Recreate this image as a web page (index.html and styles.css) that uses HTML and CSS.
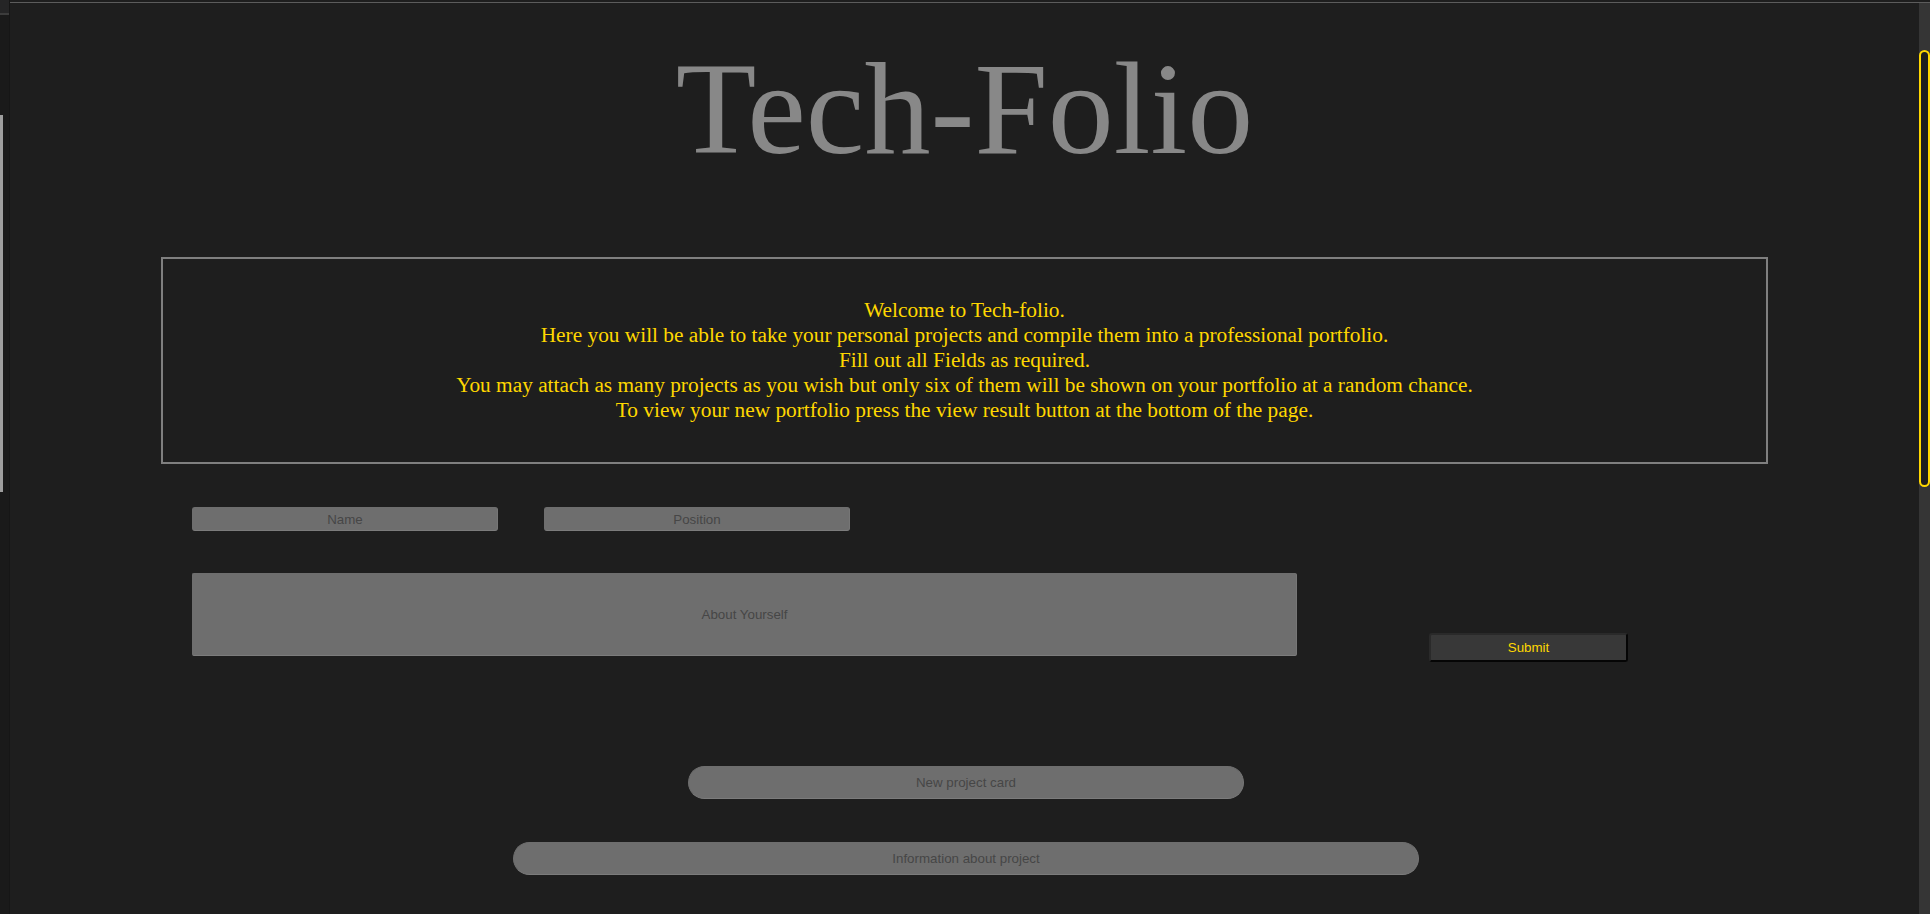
FILE: index.html
```html
<!DOCTYPE html>
<html lang="en">
<head>
<meta charset="utf-8">
<title>Tech-Folio</title>
<link rel="stylesheet" href="styles.css">
</head>
<body>
<div class="window">
  <aside class="sidebar">
    <div class="sidebar-head"></div>
    <div class="sidebar-body"><div class="sidebar-mark"></div></div>
  </aside>
  <div class="viewport">
    <div class="topline"></div>
    <div class="viewport-row">
      <main class="page">
        <h1 class="title">Tech-Folio</h1>
        <section class="intro">
          <p>Welcome to Tech-folio.<br>
          Here you will be able to take your personal projects and compile them into a professional portfolio.<br>
          Fill out all Fields as required.<br>
          You may attach as many projects as you wish but only six of them will be shown on your portfolio at a random chance.<br>
          To view your new portfolio press the view result button at the bottom of the page.</p>
        </section>
        <form class="profile">
          <div class="field-row">
            <input class="field" type="text" placeholder="Name">
            <input class="field" type="text" placeholder="Position">
          </div>
          <div class="about-row">
            <textarea class="about" placeholder="About Yourself"></textarea>
            <button class="submit" type="button">Submit</button>
          </div>
        </form>
        <div class="projects">
          <input class="pill pill-card" type="text" placeholder="New project card">
          <input class="pill pill-info" type="text" placeholder="Information about project">
        </div>
      </main>
      <div class="scrollbar"><div class="scroll-thumb"></div></div>
    </div>
  </div>
</div>
</body>
</html>
```

FILE: styles.css
```css
html, body {
  margin: 0;
  padding: 0;
  height: 100%;
  background: #1e1e1e;
  overflow: hidden;
}

.window {
  display: flex;
  height: 914px;
}

.sidebar {
  width: 10px;
  flex: none;
  display: flex;
  flex-direction: column;
  background: #1a1a1a;
  border-right: 1px solid #161616;
  box-sizing: border-box;
}

.sidebar-head {
  height: 13px;
  background: #252526;
  border-bottom: 2px solid #3c3c3c;
}

.sidebar-body {
  flex: 1;
  padding-top: 100px;
}

.sidebar-mark {
  width: 3px;
  height: 377px;
  background: #9e9e9e;
}

.viewport {
  flex: 1;
  display: flex;
  flex-direction: column;
  min-width: 0;
}

.topline {
  height: 2px;
  border-bottom: 1px solid #5c5c5c;
  flex: none;
}

.viewport-row {
  flex: 1;
  display: flex;
  min-height: 0;
}

.page {
  flex: 1;
  min-width: 0;
  display: flex;
  flex-direction: column;
}

.title {
  margin: 40px 0 0;
  text-align: center;
  font-family: "Liberation Serif", "Times New Roman", serif;
  font-weight: normal;
  font-size: 132px;
  line-height: 132px;
  color: #888888;
}

.intro {
  margin: 82px 151px 0;
  border: 2px solid #7f7f7f;
  padding: 39px 0 39px;
  text-align: center;
}

.intro p {
  margin: 0;
  font-family: "Liberation Serif", "Times New Roman", serif;
  font-size: 21.33px;
  line-height: 25px;
  color: #ffd700;
}

.profile {
  margin: 43px 151px 0;
  padding-left: 31px;
  display: flex;
  flex-direction: column;
  gap: 42px;
}

.field-row {
  display: flex;
  gap: 46px;
}

.field,
.about,
.pill {
  box-sizing: border-box;
  background: #6e6e6e;
  border: 1px solid #6e6e6e;
  border-bottom-color: #7c7c7c;
  border-right-color: #767676;
  color: #333;
  font-family: "Liberation Sans", Arial, sans-serif;
  font-size: 13.33px;
  text-align: center;
  outline: none;
  margin: 0;
}

.field::placeholder,
.about::placeholder,
.pill::placeholder {
  color: #464646;
  opacity: 1;
}

.field {
  width: 306px;
  height: 24px;
  border-radius: 3px;
  padding: 0 4px;
}

.about-row {
  display: flex;
  align-items: flex-start;
  gap: 132px;
}

.about {
  width: 1105px;
  height: 83px;
  border-radius: 2px;
  padding: 33px 4px 0;
  resize: none;
  line-height: 15px;
  overflow: hidden;
}

.submit {
  margin-top: 60px;
  width: 199px;
  height: 29px;
  box-sizing: border-box;
  background: #383838;
  border: 2px solid #2a2a2a;
  border-right-color: #050505;
  border-bottom-color: #050505;
  border-radius: 3px;
  color: #ffd700;
  font-family: "Liberation Sans", Arial, sans-serif;
  font-size: 13.33px;
  padding: 0;
}

.projects {
  margin-top: 104px;
  display: flex;
  flex-direction: column;
  align-items: center;
  gap: 43px;
  padding-left: 3px;
}

.pill {
  height: 33px;
  border-radius: 17px;
  padding: 0 16px;
}

.pill-card {
  width: 556px;
}

.pill-info {
  width: 906px;
}

.scrollbar {
  width: 11px;
  flex: none;
  background: #353535;
  padding-top: 47px;
  box-sizing: border-box;
}

.scroll-thumb {
  height: 437px;
  box-sizing: border-box;
  border: 2px solid #ffd700;
  border-radius: 6px;
  background: #1e1e1e;
}
```
